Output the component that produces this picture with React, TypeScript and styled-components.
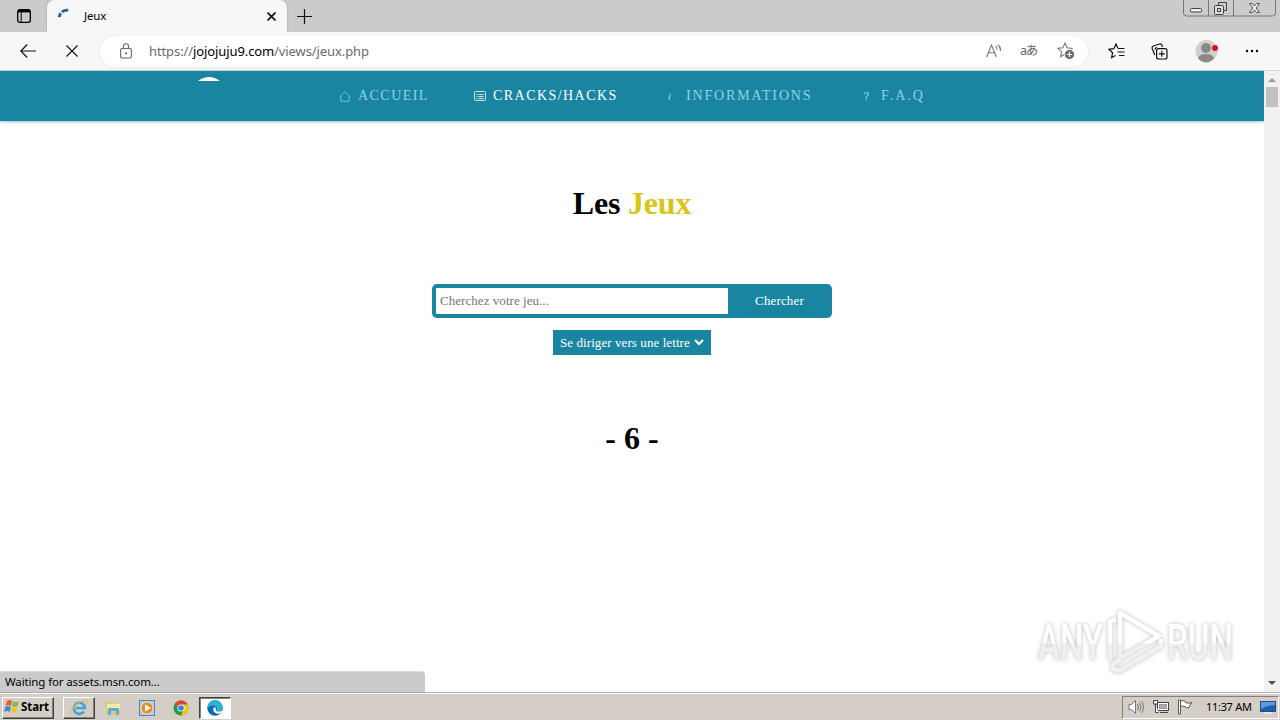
import { FC, PropsWithChildren } from "react";
import styled, { createGlobalStyle } from "styled-components";

const teal = "#1a85a1";

const App: FC = () => (
  <Screen>
    <GlobalStyle />
    <TabStrip>
      <TabActions>
        <TabActionsIcon />
      </TabActions>
      <Tab>
        <SpinnerIcon />
        <TabTitle>Jeux</TabTitle>
        <CrossIcon size={9} weight={1.6} />
      </Tab>
      <NewTab>
        <PlusIcon />
      </NewTab>
      <WindowControls />
    </TabStrip>
    <Toolbar>
      <BackIcon />
      <StopButton>
        <CrossIcon size={12} weight={1.1} />
      </StopButton>
      <AddressBar>
        <LockIcon />
        <Url>
          https://<Domain>jojojuju9.com</Domain>/views/jeux.php
        </Url>
        <AddressActions>
          <ReadAloudIcon />
          <Translate>aあ</Translate>
          <AddFavoriteIcon />
        </AddressActions>
      </AddressBar>
      <ToolbarActions>
        <FavoritesIcon />
        <CollectionsIcon />
        <ProfileIcon />
        <MoreIcon />
      </ToolbarActions>
    </Toolbar>
    <Viewport>
      <Page>
        <Navbar>
          <LogoArc />
          <NavItem icon={<HouseIcon />}>ACCUEIL</NavItem>
          <NavItem icon={<CardListIcon />} active>
            CRACKS/HACKS
          </NavItem>
          <NavItem icon={<Glyph $italic>i</Glyph>} spacing={1.85}>
            INFORMATIONS
          </NavItem>
          <NavItem icon={<Glyph>?</Glyph>} spacing={2}>
            F.A.Q
          </NavItem>
        </Navbar>
        <Title>
          Les <Accent>Jeux</Accent>
        </Title>
        <SearchForm>
          <SearchInput placeholder="Cherchez votre jeu..." />
          <SearchButton>Chercher</SearchButton>
        </SearchForm>
        <LetterSelect>
          Se diriger vers une lettre
          <ChevronIcon />
        </LetterSelect>
        <Letter>- 6 -</Letter>
      </Page>
      <Scrollbar>
        <Arrow />
        <Thumb />
        <Arrow $down />
      </Scrollbar>
      <Status>Waiting for assets.msn.com...</Status>
      <Watermark />
    </Viewport>
    <Taskbar>
      <StartButton>
        <WindowsIcon />
        Start
      </StartButton>
      <TaskButton $raised>
        <ExplorerIcon />
      </TaskButton>
      <TaskButton>
        <FolderIcon />
      </TaskButton>
      <TaskButton>
        <PlayerIcon />
      </TaskButton>
      <TaskButton>
        <ChromeIcon />
      </TaskButton>
      <TaskButton $pressed>
        <EdgeIcon />
      </TaskButton>
      <Tray>
        <SpeakerIcon />
        <NetworkIcon />
        <FlagIcon />
        <Clock>11:37 AM</Clock>
        <DesktopIcon />
      </Tray>
    </Taskbar>
  </Screen>
);

export default App;

interface NavItemProps {
  icon: React.ReactNode;
  active?: boolean;
  spacing?: number;
}
const NavItem: FC<NavItemProps & PropsWithChildren> = ({
  icon,
  active,
  spacing = 1.45,
  children,
}) => (
  <NavLink $active={active} $spacing={spacing}>
    <NavIcon>{icon}</NavIcon>
    {children}
  </NavLink>
);

const TabActionsIcon = () => (
  <svg width="14" height="14" viewBox="0 0 14 14" fill="none" stroke="#000">
    <rect x=".7" y=".7" width="12.6" height="12.6" rx="2" strokeWidth="1.3" />
    <path d="M1 2.2h12" strokeWidth="2.4" />
    <path d="M4.2 3v10" />
  </svg>
);

const SpinnerIcon = () => (
  <svg width="16" height="16" viewBox="0 0 16 16" fill="none" stroke="#1f6496">
    <path d="M3.2 9.2Q3.4 6.6 4.8 5.2" strokeWidth="3" />
    <path d="M5.8 4Q8.5 1.9 12.2 2.2" strokeWidth="2.8" />
  </svg>
);

const CrossIcon: FC<{ size: number; weight: number }> = ({ size, weight }) => (
  <svg width={size} height={size} viewBox={`0 0 ${size} ${size}`}>
    <path
      d={`M.5 .5L${size - 0.5} ${size - 0.5}M${size - 0.5} .5L.5 ${size - 0.5}`}
      stroke="#111"
      strokeWidth={weight}
    />
  </svg>
);

const PlusIcon = () => (
  <svg width="15" height="15" viewBox="0 0 15 15">
    <path d="M7.5 0v15M0 7.5h15" stroke="#111" strokeWidth="1.2" />
  </svg>
);

const WindowControls = () => (
  <Controls width="95" height="18" viewBox="0 0 95 18" fill="none" stroke="#777">
    <path d="M.5 0v13q0 3 3 3h86q3 0 3-3V0M25.5 0v16M50.5 0v16" />
    <g stroke="#444">
      <rect x="7.5" y="8.5" width="11" height="3.5" rx="1" fill="#eee" />
      <path d="M35.5 5V2.5h8v8H41" />
      <rect x="31.5" y="5.5" width="9" height="9" rx="1" fill="#ddd" />
      <rect x="34.5" y="8.5" width="3" height="3" />
      <path
        fill="#eee"
        strokeWidth=".9"
        d="M66.5 3.5h3l2 2.5 2-2.5h3l-3.3 4.500 3.3 4.500h-3l-2-2.500-2 2.500h-3L69.800 8z"
      />
    </g>
  </Controls>
);

const BackIcon = () => (
  <svg width="16" height="14" viewBox="0 0 16 14" fill="none" stroke="#111" strokeWidth="1.2">
    <path d="M7.2 .5L.8 7l6.4 6.5M1 7h15" />
  </svg>
);

const LockIcon = () => (
  <svg width="12" height="16" viewBox="0 0 12 16" fill="none" stroke="#666" strokeWidth="1.1">
    <rect x=".6" y="5.5" width="10.8" height="9.5" rx="1.5" />
    <path d="M3.5 5.5V3.3a2.5 2.5 0 0 1 5 0v2.2" />
    <circle cx="6" cy="10.3" r=".6" fill="#666" />
  </svg>
);

const ReadAloudIcon = () => (
  <svg width="16" height="15" viewBox="0 0 16 15" fill="none" stroke="#777" strokeWidth="1.1">
    <path d="M.6 13L5.500 1l4.900 12M2.400 8.800h6.200M9.500 2.200q1.700 1.400 1.400 3.600M11.800 .7q3.300 2.500 2.600 6.300" />
  </svg>
);

const starPath =
  "M8 1l2.100 4.700 5 .6-3.700 3.400 1 5L8 12.200 3.600 14.700l1-5L.9 6.300l5-.6z";

const AddFavoriteIcon = () => (
  <svg width="18" height="18" viewBox="0 0 18 18" fill="none" stroke="#777">
    <path d={starPath} strokeWidth="1.1" />
    <circle cx="12.5" cy="12.5" r="5" fill="#666" stroke="#fff" />
    <path d="M12.5 9.8v5.4M9.8 12.5h5.4" stroke="#fff" strokeWidth="1.2" />
  </svg>
);

const FavoritesIcon = () => (
  <svg width="17" height="16" viewBox="0 0 17 16" fill="none" stroke="#111" strokeWidth="1.2">
    <path d="M10 5.500L8 1 5.900 5.700.9 6.300l3.700 3.400-1 5L7.500 12.500M10 5.500h6.500M9.500 9h7M11 12.500h5.500" />
  </svg>
);

const CollectionsIcon = () => (
  <svg width="17" height="17" viewBox="0 0 17 17" fill="none" stroke="#111" strokeWidth="1.2">
    <rect x="5.6" y="5.6" width="10.4" height="10.4" rx="2" />
    <path d="M10.800 7.800v6M7.800 10.800h6M3.800 12L1.200 5.500q-.6-1.800 1.200-2.500l6-2q2-.6 2.600 1.200l.3 1.800" />
    <path d="M6 4.500q-1.500 0-2 2" />
  </svg>
);

const ProfileIcon = () => (
  <svg width="24" height="24" viewBox="0 0 24 24">
    <circle cx="11.5" cy="12" r="11" fill="#d2d0ce" />
    <circle cx="11" cy="9" r="5" fill="#8b8988" />
    <path d="M3 19.500q1-4.500 8-4.500t8 4.500q-4 4-8 4t-8-4z" fill="#8b8988" />
    <circle cx="20" cy="9" r="3" fill="#d9121c" />
  </svg>
);

const MoreIcon = () => (
  <svg width="14" height="4" viewBox="0 0 14 4">
    <circle cx="2" cy="2" r="1.2" />
    <circle cx="7" cy="2" r="1.2" />
    <circle cx="12" cy="2" r="1.2" />
  </svg>
);

const LogoArc = () => (
  <LogoSvg width="23" height="4" viewBox="0 0 23 4">
    <path d="M1 4Q12-4 23 4z" fill="#fff" />
  </LogoSvg>
);

const HouseIcon = () => (
  <svg width="12" height="11" viewBox="0 0 12 11" fill="none" stroke="currentColor" strokeWidth=".9">
    <path d="M.5 6L6 .8 11.5 6M1.8 5v5.3h8.4V5" />
  </svg>
);

const CardListIcon = () => (
  <svg width="12" height="10" viewBox="0 0 12 10" fill="none" stroke="currentColor">
    <rect x=".5" y=".5" width="11" height="9" rx="1" />
    <path d="M2.5 3.500h1M4.500 3.500h5M2.500 5.500h1M4.500 5.500h5M2.500 7.500h1M4.500 7.500h5" />
  </svg>
);

const ChevronIcon = () => (
  <svg width="10" height="7" viewBox="0 0 10 7" fill="none" stroke="#fff" strokeWidth="2.2">
    <path d="M1 1l4 4 4-4" />
  </svg>
);

const Watermark = () => (
  <WatermarkSvg width="244" height="76" viewBox="0 0 244 76">
    <defs>
      <linearGradient id="fade" x1="0" y1="0" x2="0" y2="76" gradientUnits="userSpaceOnUse">
        <stop offset=".48" stopColor="#fff" />
        <stop offset=".5" stopColor="#f0f0f0" />
      </linearGradient>
    </defs>
    <g fill="url(#fade)" fontFamily="Roboto, sans-serif" fontSize="50" fontWeight="500">
      <text x="4" y="54" textLength="65" lengthAdjust="spacingAndGlyphs">
        ANY
      </text>
      <text x="133" y="54" textLength="66" lengthAdjust="spacingAndGlyphs">
        RUN
      </text>
    </g>
    <g fill="none" stroke="url(#fade)" strokeWidth="4.5" strokeLinejoin="round">
      <path d="M86 7v45l39-22z" />
      <path d="M82 13l-6 3v38M87 53l-8 5v5l6 2 42-25v-7" />
    </g>
  </WatermarkSvg>
);

const WindowsIcon = () => (
  <svg width="16" height="15" viewBox="0 0 16 15">
    <path d="M3 2q3-2 5 0L7 7Q4.5 5 1.5 7z" fill="#e35f2c" />
    <path d="M9 2q3 2 6 0l-1.5 5Q10.5 8.5 8 7z" fill="#83b944" />
    <path d="M1.3 8q3-2 5.5 0l-1 5Q3 11 0 13z" fill="#3c8bce" />
    <path d="M8 8q3 2 5.5 0L12 13q-3 1.5-5.2 0z" fill="#f3be2d" />
  </svg>
);

const ExplorerIcon = () => (
  <svg width="18" height="18" viewBox="0 0 18 18" fill="none">
    <path d="M14 12.500A5.600 5.600 0 1 1 15 9H6" stroke="#3fa3df" strokeWidth="2.6" />
    <path d="M2.500 15.500Q-1 12 6 6t10.500-4.500q1 1-.5 3.500" stroke="#e8b94b" strokeWidth="1.2" />
  </svg>
);

const FolderIcon = () => (
  <svg width="17" height="16" viewBox="0 0 17 16">
    <path d="M1 2h5l1 1h6v3h2v8H1z" fill="#e6c767" />
    <path d="M2 4h13v6H2z" fill="#f6e9a7" />
    <path d="M3 15V9q0-1 1-1h9q1 0 1 1v6h-3v-4H6v4z" fill="#58aed5" />
  </svg>
);

const PlayerIcon = () => (
  <svg width="16" height="16" viewBox="0 0 16 16">
    <rect x=".5" y=".5" width="15" height="15" fill="#a9d0ec" stroke="#5185b8" />
    <circle cx="8" cy="8" r="6" fill="#f08a1c" stroke="#fff" strokeWidth=".6" />
    <path d="M6 4.5v7L12 8z" fill="#fff" />
  </svg>
);

const ChromeIcon = () => (
  <svg width="16" height="16" viewBox="0 0 16 16">
    <circle cx="8" cy="8" r="7.5" fill="#269849" />
    <path d="M8 8L1.5 4.200A7.500 7.500 0 0 1 14.500 4.200z" fill="#dd4537" />
    <path d="M8 8V4.500h6.600A7.500 7.500 0 0 1 8 15.500L11 9.500z" fill="#f8c819" />
    <circle cx="8" cy="8" r="3.6" fill="#fff" />
    <circle cx="8" cy="8" r="2.8" fill="#3d7de0" />
  </svg>
);

const EdgeIcon = () => (
  <svg width="16" height="16" viewBox="0 0 16 16">
    <circle cx="8" cy="8" r="7.7" fill="#0d66b8" />
    <path d="M.3 8A7.700 7.700 0 0 1 15.700 7.500q0 4-4.500 3.700-2-.2-1.700-1.500 1-2-1-3.500Q5 4 .3 8z" fill="#2cb5c9" />
    <path d="M6.500 8q-1 4 3 5.500 3 .8 5.500-1.500 1-.8.700-1.500-2 1.500-5 .9-3-.8-1.700-3Q8 6.500 6.500 8z" fill="#fff" />
  </svg>
);

const SpeakerIcon = () => (
  <svg width="17" height="16" viewBox="0 0 17 16" fill="none" stroke="#777">
    <path d="M1 5.500h2.500L7.500 1.500v13l-4-4H1z" fill="#fff" />
    <path d="M9.500 5q2 3 0 6M11.500 3.500q3 4.500 0 9M13.500 2q4 6 0 12" />
  </svg>
);

const NetworkIcon = () => (
  <svg width="17" height="16" viewBox="0 0 17 16" fill="#fff" stroke="#444">
    <rect x="4.5" y="3.5" width="11" height="8" />
    <rect x="6.5" y="5.5" width="7" height="4" fill="#aaa" stroke="#999" />
    <path d="M.5 1.500h4v3.500h-4zM2.500 5v8.500h3M7 13.500h8" />
  </svg>
);

const FlagIcon = () => (
  <svg width="16" height="16" viewBox="0 0 16 16" fill="#fff" stroke="#555">
    <path d="M.5 1v14h2V1z" />
    <path d="M2.500 2.500q3-2 5 0v1q3 1.500 6.500 0-2 2-3 5-3 1-4-1-2-1-4.500 0z" />
  </svg>
);

const DesktopIcon = () => (
  <svg width="16" height="14" viewBox="0 0 16 14">
    <rect x=".5" y="1.5" width="15" height="10" fill="#1d5cb2" stroke="#244b83" />
    <path d="M1 2h14v3Q7 5 1 9z" fill="#5c9ae0" />
    <path d="M4 13h8" stroke="#fff" />
  </svg>
);

const GlobalStyle = createGlobalStyle`
  * {
    box-sizing: border-box;
  }
  body {
    margin: 0;
    overflow: hidden;
  }
  svg {
    display: block;
    flex: none;
  }
`;

const Screen = styled.div`
  display: flex;
  flex-direction: column;
  width: 1280px;
  height: 720px;
  background: #fff;
  font-family: "Noto Sans", sans-serif;
  white-space: nowrap;
`;

const TabStrip = styled.div`
  display: flex;
  height: 32px;
  background: #cbcbcb;
`;

const TabActions = styled.div`
  display: flex;
  align-items: center;
  width: 47px;
  padding-left: 17px;
`;

const Tab = styled.div`
  display: flex;
  align-items: center;
  width: 240px;
  padding: 0 11px 0 9px;
  background: #f7f7f7;
  border-radius: 7px 7px 0 0;
  box-shadow: 0 0 2px #999;
  clip-path: inset(0 -3px 0 -3px);
`;

const TabTitle = styled.div`
  flex: 1;
  padding: 0 0 2px 12px;
  font-size: 11.5px;
  letter-spacing: -0.2px;
`;

const NewTab = styled.div`
  display: flex;
  align-items: center;
  padding-left: 10px;
`;

const Controls = styled.svg`
  margin-left: auto;
  margin-right: 2px;
`;

const Toolbar = styled.div`
  display: flex;
  align-items: center;
  height: 39px;
  padding-left: 20px;
  background: #f7f7f7;
  border-bottom: 1px solid #ccd8da;
`;

const StopButton = styled.div`
  width: 34px;
  margin-left: 30px;
`;

const AddressBar = styled.div`
  display: flex;
  align-items: center;
  width: 988px;
  height: 31px;
  padding: 0 13px 0 20px;
  background: #fff;
  border-radius: 16px;
  box-shadow: 0 0 2px #ddd;
`;

const Url = styled.div`
  padding-left: 17px;
  color: #6b6b6b;
  font-size: 13px;
  letter-spacing: -0.1px;
`;

const Domain = styled.span`
  color: #000;
`;

const AddressActions = styled.div`
  display: flex;
  align-items: center;
  margin-left: auto;
`;

const Translate = styled.div`
  width: 37px;
  margin-left: 18px;
  padding-bottom: 1px;
  color: #666;
  font: 12.5px/16px "Noto Sans", "Noto Sans CJK JP", sans-serif;
  letter-spacing: -1.2px;
`;

const ToolbarActions = styled.div`
  display: flex;
  align-items: center;
  justify-content: space-between;
  width: 151px;
  margin-left: 20px;
`;

const Viewport = styled.div`
  position: relative;
  display: flex;
  height: 621px;
`;

const Page = styled.div`
  display: flex;
  flex-direction: column;
  align-items: center;
  width: 1264px;
  font-family: "Liberation Serif", serif;
`;

const Navbar = styled.div`
  display: grid;
  grid-template-columns: 142px 135px 193px 195px 1fr;
  width: 100%;
  height: 50px;
  padding-left: 197px;
  background: ${teal};
  box-shadow: 0 1px 3px #8fc4cd;
`;

const LogoSvg = styled.svg`
  margin-top: 6px;
`;

const NavLink = styled.div<{ $active?: boolean; $spacing: number }>`
  display: flex;
  align-items: center;
  height: 49px;
  color: ${({ $active }) => ($active ? "#fff" : "#8fd3e3")};
  font-size: 14px;
  letter-spacing: ${({ $spacing }) => $spacing}px;
`;

const NavIcon = styled.div`
  width: 19px;
  padding-top: 1px;
  opacity: 0.8;
`;

const Glyph = styled.span<{ $italic?: boolean }>`
  padding-left: 1px;
  font-family: "Liberation Sans", sans-serif;
  font-size: 11px;
  font-weight: bold;
  ${({ $italic }) =>
    $italic && `font-family: "Liberation Serif", serif; font-style: italic;`}
`;

const Title = styled.h1`
  margin: 64px 0 0;
  font-size: 32px;
  line-height: 37px;
  letter-spacing: -0.2px;
`;

const Accent = styled.span`
  color: #d9c514;
`;

const SearchForm = styled.div`
  display: flex;
  width: 400px;
  height: 34px;
  margin-top: 62px;
  padding: 4px;
  background: ${teal};
  border-radius: 5px;
`;

const SearchInput = styled.input`
  width: 292px;
  padding: 0 4px;
  border: 0;
  font: 13px "Liberation Serif", serif;
  letter-spacing: 0.05px;

  &::placeholder {
    color: #757575;
  }
`;

const SearchButton = styled.div`
  flex: 1;
  padding-left: 3px;
  color: #fff;
  font-size: 13px;
  line-height: 26px;
  letter-spacing: 0.15px;
  text-align: center;
`;

const LetterSelect = styled.div`
  display: flex;
  align-items: center;
  justify-content: space-between;
  width: 158px;
  height: 25px;
  margin-top: 12px;
  padding: 0 7px;
  background: ${teal};
  color: #fff;
  font-size: 13px;
  letter-spacing: 0.08px;
`;

const Letter = styled.h2`
  margin: 65px 0 0;
  font-size: 32px;
  line-height: 37px;
`;

const Scrollbar = styled.div`
  display: flex;
  flex-direction: column;
  align-items: center;
  width: 16px;
  padding: 7px 0;
  background: #f1f1f1;
`;

const Arrow = styled.div<{ $down?: boolean }>`
  margin-top: ${({ $down }) => ($down ? "auto" : "0")};
  border: 4px solid transparent;
  ${({ $down }) =>
    $down
      ? "border-top-color: #505050; border-bottom: 0;"
      : "border-bottom-color: #999; border-top: 0;"}
`;

const Thumb = styled.div`
  width: 12px;
  height: 20px;
  margin-top: 5px;
  background: #c1c1c1;
`;

const Status = styled.div`
  position: absolute;
  left: 0;
  bottom: 0;
  width: 425px;
  height: 21px;
  padding-left: 5px;
  background: #cbcbcb;
  border-top: 1px solid #ddd;
  border-radius: 0 4px 0 0;
  font-size: 11.5px;
  line-height: 20px;
  letter-spacing: -0.13px;
`;

const WatermarkSvg = styled.svg`
  position: absolute;
  left: 1034px;
  top: 535px;
  filter: drop-shadow(0 0 2px #bbb);
`;

const Taskbar = styled.div`
  display: flex;
  align-items: center;
  height: 28px;
  padding: 2px 1px 0 2px;
  background: #d5cec6;
  border-top: 1px solid #aaa;
  box-shadow: inset 0 1px #fff;
`;

const StartButton = styled.div`
  display: flex;
  align-items: center;
  gap: 1px;
  width: 52px;
  height: 22px;
  margin-right: 9px;
  padding: 0 0 2px 1px;
  border: 1px solid;
  border-color: #fff #404040 #404040 #fff;
  box-shadow: inset -1px -1px #858078;
  font: bold 11.5px "Noto Sans", sans-serif;
  letter-spacing: -0.1px;
`;

const TaskButton = styled.div<{ $raised?: boolean; $pressed?: boolean }>`
  display: flex;
  align-items: center;
  justify-content: center;
  width: 32px;
  height: 22px;
  margin-right: 2px;
  border: 1px solid transparent;
  ${({ $raised }) =>
    $raised &&
    "border-color: #fff #404040 #404040 #fff; box-shadow: inset -1px -1px #858078;"}
  ${({ $pressed }) =>
    $pressed &&
    "background: #fff; border-color: #404040 #fff #fff #404040; box-shadow: inset 1px 1px #858078;"}
`;

const Tray = styled.div`
  display: flex;
  align-items: center;
  gap: 8px;
  width: 157px;
  height: 23px;
  margin-left: auto;
  padding: 0 0 2px 5px;
  border: 1px solid;
  border-color: #858078 #fff #fff #858078;
`;

const Clock = styled.div`
  width: 46px;
  margin-left: 4px;
  font-size: 11px;
  letter-spacing: -0.3px;
`;
